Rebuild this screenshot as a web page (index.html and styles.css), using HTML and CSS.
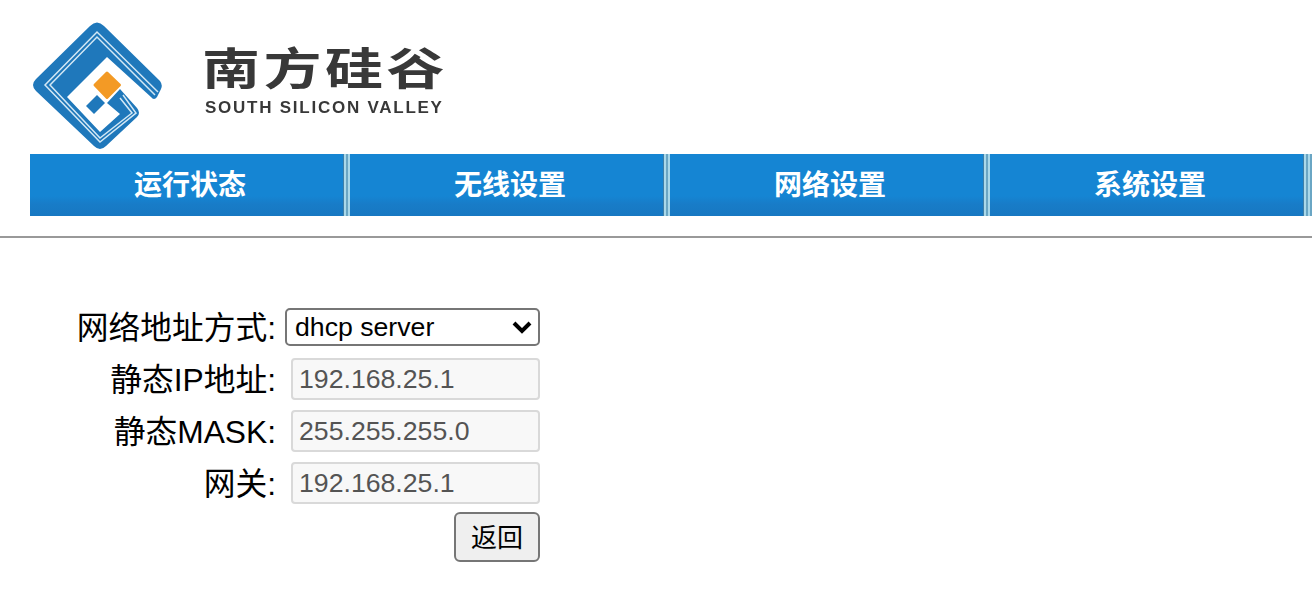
FILE: index.html
```html
<!DOCTYPE html>
<html lang="zh-CN">
<head>
    <meta charset="UTF-8">
    <meta name="viewport" content="width=device-width, initial-scale=1.0">
    <title>网络设置</title>
    <link rel="stylesheet" href="styles.css">
</head>
<body>
    <header class="header">
        <svg class="logo" width="140" height="154" viewBox="28 0 140 154">
            <path class="logo-blue" d="M90 26 Q97 19 104 26 L160 81 Q163 85 161 89 L157 97 Q154 101 151 97 L107 57 L67 97 L100 132 L120 114 L107 103 L120 89 L137 108 Q141 113 137 117 L106 146 Q100 152 94 146 L36 91 Q30 85 36 79 Z"/>
            <path class="logo-line" d="M158 92 L97 32 L45 85 L100 142 L136 113 L123 95"/>
            <path class="logo-line" d="M155 95 L97 37 L50 85 L100 138 L132 113 L120 98"/>
            <path class="logo-blue" d="M86 106 L97 95 L105 103 L94 114 Z"/>
            <path class="logo-chip" d="M107 73 L119.500 85 L107 97.500 L95 85 Z"/>
        </svg>
        <div class="brand">
            <div class="brand-name">南方硅谷</div>
            <div class="brand-sub">SOUTH SILICON VALLEY</div>
        </div>
    </header>
    <nav class="nav">
        <a class="nav-item">运行状态</a>
        <a class="nav-item">无线设置</a>
        <a class="nav-item">网络设置</a>
        <a class="nav-item">系统设置</a>
    </nav>
    <hr class="divider">
    <form class="form">
        <div class="row row-select">
            <label>网络地址方式:</label>
            <div class="select-wrap">
                <select>
                    <option>dhcp server</option>
                </select>
                <svg class="select-arrow" width="20" height="14" viewBox="0 0 20 14">
                    <path d="M2 3 L10 11 L18 3"/>
                </svg>
            </div>
        </div>
        <div class="row">
            <label>静态IP地址:</label>
            <input type="text" value="192.168.25.1" disabled>
        </div>
        <div class="row">
            <label>静态MASK:</label>
            <input type="text" value="255.255.255.0" disabled>
        </div>
        <div class="row">
            <label>网关:</label>
            <input type="text" value="192.168.25.1" disabled>
        </div>
        <div class="row row-btn">
            <button type="button" class="btn">返回</button>
        </div>
    </form>
</body>
</html>
```

FILE: styles.css
```css
body {
    margin: 0;
    background-color: #fff;
    color: #000;
    font-family: "Liberation Sans", "Noto Sans CJK SC", sans-serif;
    overflow: hidden;
}
.header {
    display: flex;
    align-items: flex-start;
    height: 154px;
    padding-left: 28px;
}
.logo {
    filter: blur(0.5px);
}
.logo-blue {
    fill: #1f78bb;
}
.logo-line {
    fill: none;
    stroke: #d3e8f5;
    stroke-width: 1.5;
}
.logo-chip {
    fill: #f39a25;
    stroke: #f39a25;
    stroke-width: 3;
    stroke-linejoin: round;
}
.brand {
    margin-left: 37px;
    padding-top: 40px;
    color: #383838;
    filter: blur(0.4px);
}
.brand-name {
    margin-left: -3px;
    font-size: 58px;
    font-weight: 700;
    line-height: 60px;
    letter-spacing: 3.500px;
    white-space: nowrap;
    transform: scaleY(0.77);
    transform-origin: center 30px;
}
.brand-sub {
    font-size: 17px;
    font-weight: 700;
    line-height: 16px;
    letter-spacing: 1.75px;
    white-space: nowrap;
}
.nav {
    display: flex;
    height: 62px;
    margin-left: 30px;
}
.nav-item {
    flex: 0 0 320px;
    box-sizing: border-box;
    color: #fff;
    font-family: "Noto Sans CJK SC", sans-serif;
    font-size: 28px;
    font-weight: 700;
    line-height: 58px;
    text-align: center;
    background: linear-gradient(to right, transparent 313px, #3f7fa8 313px, #3f7fa8 314px, #a9d8ea 314px, #a9d8ea 316px, #6aa6c4 316px, #6aa6c4 318px, #a9d8ea 318px, #a9d8ea 320px, #6aa6c4 320px),
        linear-gradient(to bottom, #1585d3 0, #1585d3 42px, #187cc8 50px, #1778c2 100%);
}
.nav-item:last-child {
    flex-basis: 322px;
    padding-right: 2px;
}
.divider {
    height: 2px;
    margin: 20px 0 0;
    border: 0;
    background-color: #999;
}
.form {
    width: 540px;
    margin-top: 68px;
}
.row {
    display: flex;
    justify-content: flex-end;
    align-items: center;
    height: 42px;
    margin-bottom: 10px;
}
.row label {
    margin-right: 15px;
    padding-bottom: 4px;
    font-size: 31.75px;
    white-space: nowrap;
}
.row-select label {
    margin-right: 9px;
}
.select-wrap {
    position: relative;
    height: 38px;
}
select {
    box-sizing: border-box;
    width: 255px;
    height: 38px;
    padding: 0 8px;
    border: 2px solid #767676;
    border-radius: 5px;
    background-color: #fff;
    font-family: "Liberation Sans", sans-serif;
    font-size: 26.67px;
    appearance: none;
}
.select-arrow {
    position: absolute;
    top: 12px;
    right: 8px;
    pointer-events: none;
}
.select-arrow path {
    fill: none;
    stroke: #000;
    stroke-width: 4;
}
input {
    box-sizing: border-box;
    width: 249px;
    height: 42px;
    padding: 2px 6px;
    border: 2px solid #d9d9d9;
    border-radius: 4px;
    background-color: #f8f8f8;
    color: #545454;
    font-family: "Liberation Sans", sans-serif;
    font-size: 26.67px;
}
.row-btn {
    height: 50px;
    margin-top: -2px;
}
.btn {
    box-sizing: border-box;
    width: 86px;
    height: 50px;
    padding: 0 0 4px;
    border: 2px solid #767676;
    border-radius: 6px;
    background-color: #efefef;
    color: #000;
    font-family: "Liberation Sans", "Noto Sans CJK SC", sans-serif;
    font-size: 26px;
}
```
